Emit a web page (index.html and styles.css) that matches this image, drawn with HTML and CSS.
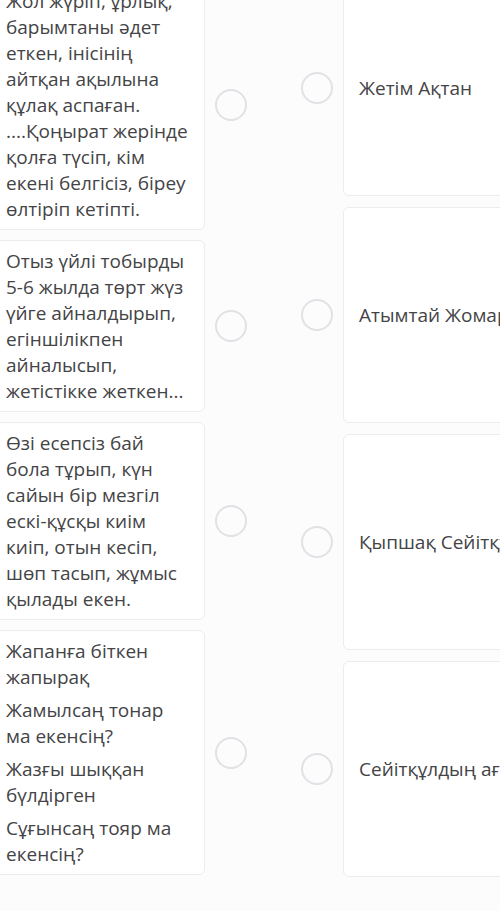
FILE: index.html
```html
<!DOCTYPE html>
<html lang="kk">
<head>
<meta charset="utf-8">
<title>Сәйкестендіру</title>
<link rel="stylesheet" href="styles.css">
</head>
<body>
<div class="board">
  <div class="col col-left">
    <div class="item">
      <div class="card card-q">
        <p>Жол жүріп, ұрлық, барымтаны әдет еткен, інісінің айтқан ақылына құлақ аспаған. ....Қоңырат жерінде қолға түсіп, кім екені белгісіз, біреу өлтіріп кетіпті.</p>
      </div>
      <span class="dot"></span>
    </div>
    <div class="item">
      <div class="card card-q">
        <p>Отыз үйлі тобырды 5-6 жылда төрт жүз үйге айналдырып, егіншілікпен айналысып, жетістікке жеткен...</p>
      </div>
      <span class="dot"></span>
    </div>
    <div class="item">
      <div class="card card-q">
        <p>Өзі есепсіз бай бола тұрып, күн сайын бір мезгіл ескі-құсқы киім киіп, отын кесіп, шөп тасып, жұмыс қылады екен.</p>
      </div>
      <span class="dot"></span>
    </div>
    <div class="item">
      <div class="card card-q">
        <p>Жапанға біткен жапырақ</p>
        <p>Жамылсаң тонар ма екенсің?</p>
        <p>Жазғы шыққан бүлдірген</p>
        <p>Сұғынсаң тояр ма екенсің?</p>
      </div>
      <span class="dot"></span>
    </div>
  </div>
  <div class="col col-right">
    <div class="item">
      <span class="dot"></span>
      <div class="card card-a"><p>Жетім Ақтан</p></div>
    </div>
    <div class="item">
      <span class="dot"></span>
      <div class="card card-a"><p>Атымтай Жомарт</p></div>
    </div>
    <div class="item">
      <span class="dot"></span>
      <div class="card card-a"><p>Қыпшақ Сейітқұл</p></div>
    </div>
    <div class="item">
      <span class="dot"></span>
      <div class="card card-a"><p>Сейітқұлдың ағасы</p></div>
    </div>
  </div>
</div>
</body>
</html>
```

FILE: styles.css
```css
html, body {
  margin: 0;
  padding: 0;
  background: #fcfcfc;
  overflow: hidden;
}

body {
  font-family: "Open Sans", "Noto Sans", sans-serif;
  font-size: 19px;
  line-height: 26px;
  color: #444446;
  width: 500px;
  height: 911px;
}

.board {
  display: flex;
  gap: 54px;
  margin-left: -10px;
  margin-top: -20px;
  width: 760px;
}

.col {
  display: flex;
  flex-direction: column;
}

.col-left {
  gap: 10px;
}

.col-right {
  gap: 11px;
}

.item {
  display: flex;
  align-items: center;
  gap: 10px;
}

.card {
  background: #ffffff;
  border: 1px solid #ececec;
  border-radius: 6px;
  box-sizing: border-box;
}

.card p {
  margin: 0;
}

.card-q {
  width: 215px;
  padding: 7px 12px 7px 15px;
}

.card-q p + p {
  margin-top: 7px;
}

.card-a {
  width: 240px;
  height: 216px;
  padding: 0 15px;
  display: flex;
  align-items: center;
  white-space: nowrap;
}

.dot {
  flex: none;
  width: 32px;
  height: 32px;
  box-sizing: border-box;
  border: 2.5px solid #e1e1e6;
  border-radius: 50%;
  background: #fcfcfc;
}
```
